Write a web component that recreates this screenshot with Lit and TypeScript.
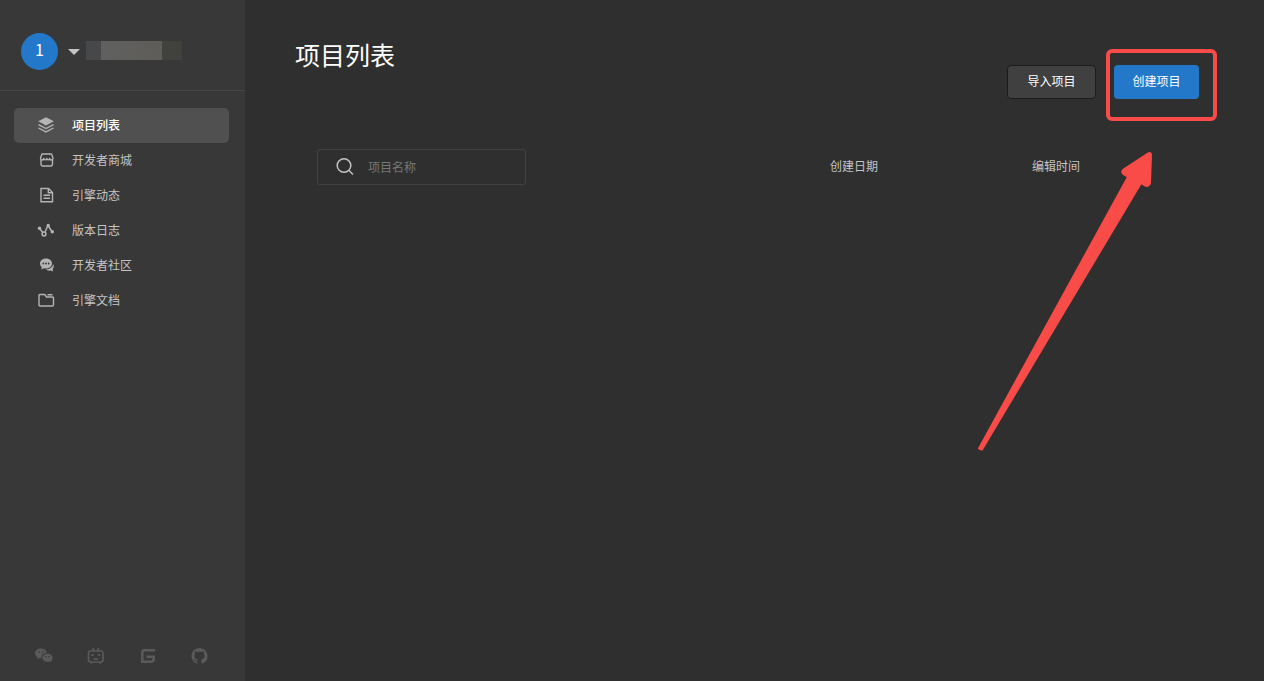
import { LitElement, html, css, svg } from "lit";
import { customElement } from "lit/decorators.js";

const navItems = [
  {
    label: "项目列表",
    icon: svg`<path fill="currentColor" d="M10 1.200 2.200 5.300 10 9.400l7.800-4.100z"/><path fill="none" stroke="currentColor" stroke-width="1.400" d="M2.500 8.600 10 12.500l7.500-3.900M2.500 12 10 15.900l7.500-3.900"/>`,
  },
  {
    label: "开发者商城",
    icon: svg`<g fill="none" stroke="currentColor" stroke-width="1.400" stroke-linejoin="round"><path d="M6 3h9.500l1.500 4c0 2.600-3.100 2.600-3.300.4-.2 2-2.800 2-2.900 0-.1 2-2.800 2-3 0C7.600 9.600 4.500 9.600 4.500 7z"/><path d="M5 9v4.600q0 1.400 1.400 1.400h8.700q1.400 0 1.400-1.400V9"/></g>`,
  },
  {
    label: "引擎动态",
    icon: svg`<g fill="none" stroke="currentColor" stroke-width="1.400"><path d="M5 2.500h7.500l4 4v9.200H5z"/><path d="M12.300 2.500v4.200h4.200M7.500 9.200h6.500M7.500 12.200h6.500"/></g>`,
  },
  {
    label: "版本日志",
    icon: svg`<g fill="none" stroke="currentColor" stroke-width="1.500"><path d="m3.500 7.500 3.300 4M9 11l3-6.500 4 6"/><circle cx="8" cy="13" r="1.900"/></g><g fill="currentColor"><circle cx="3.500" cy="7.200" r="1.700"/><circle cx="12.200" cy="4.500" r="1.700"/><circle cx="16.300" cy="10.700" r="1.700"/></g>`,
  },
  {
    label: "开发者社区",
    icon: svg`<path fill="currentColor" d="M10 2.500c3.500 0 6 2.200 6 5s-2.500 5-6 5q-1.100 0-2.100-.3L5.400 13.400l.3-2.300C4.600 10.200 4 9 4 7.500c0-2.800 2.500-5 6-5m7 5.600c1.300 1.600.8 3.900-.3 5l.3 2.500-2.200-1.100c-2 .4-4-.1-4.700-1 3.600-.2 6.800-2.200 6.900-5.400"/><g fill="#383838"><circle cx="7.300" cy="7.500" r=".9"/><circle cx="10" cy="7.500" r=".9"/><circle cx="12.700" cy="7.500" r=".9"/></g>`,
  },
  {
    label: "引擎文档",
    icon: svg`<path fill="none" stroke="currentColor" stroke-width="1.400" stroke-linejoin="round" d="M3.800 3.500h5l1.700 2.500h6q1 0 1 1v7q0 1-1 1H4q-1 0-1-1V4.500q0-1 .8-1M11.500 3.700h5"/>`,
  },
];

const socialLinks = [
  {
    label: "微信",
    icon: svg`<path fill="currentColor" d="M7 2.500c3.200 0 5.700 1.900 6 4.500-3.500 0-6 2-5.500 5.200q-1.200.1-2.500-.3L2.700 13l.6-2C1.800 10 1 8.800 1 7.300 1 4.600 3.700 2.500 7 2.500m6.500 5.200c3 0 5.200 1.700 5.200 4 0 1.300-.7 2.300-1.700 3l.4 1.600-1.900-.9q-1 .3-2 .3c-2.900 0-5.200-1.700-5.200-4s2.300-4 5.200-4"/><g fill="#383838"><circle cx="5" cy="6" r=".8"/><circle cx="9" cy="6" r=".8"/><circle cx="11.800" cy="10.500" r=".7"/><circle cx="15.200" cy="10.500" r=".7"/></g>`,
  },
  {
    label: "哔哩哔哩",
    icon: svg`<g fill="none" stroke="currentColor" stroke-width="1.600"><rect x="2.500" y="5" width="14.500" height="11" rx="2"/><path d="m6.500 2 2 3M13 2l-2 3M5 9.500l3-1M14.500 9.500l-3-1M7.500 12.700l1.200.7 1-.7 1 .7 1.200-.7M5.500 16v1.700M14 16v1.700"/></g>`,
  },
  {
    label: "Gitee",
    icon: svg`<path fill="none" stroke="currentColor" stroke-width="2.600" d="M17 4.300H6.500q-2.200 0-2.200 2.200v9.200H13q2.700 0 2.700-2.700v-2.300H8.500"/>`,
  },
  {
    label: "GitHub",
    icon: svg`<path fill="currentColor" transform="translate(1.500 2)" fill-rule="evenodd" d="M8 0C3.600 0 0 3.600 0 8c0 3.500 2.300 6.500 5.500 7.600.4.100.5-.2.500-.4v-1.500c-2 .4-2.500-.5-2.700-.9-.1-.3-.5-1-.8-1.200-.3-.2-.7-.5 0-.5.600 0 1.100.6 1.200.8.700 1.200 1.900.9 2.300.7.100-.5.300-.9.500-1.100-1.800-.2-3.600-.9-3.600-4 0-.9.300-1.600.8-2.100-.1-.2-.4-1 .1-2.100 0 0 .7-.2 2.200.8a7.600 7.600 0 0 1 4 0c1.500-1 2.200-.8 2.200-.8.400 1.100.200 1.900.1 2.100.5.600.8 1.300.8 2.100 0 3.100-1.900 3.700-3.700 3.900.3.300.6.800.6 1.500v2.300c0 .2.100.5.500.4A8 8 0 0 0 16 8c0-4.400-3.600-8-8-8"/>`,
  },
];

@customElement("app-root")
export class AppRoot extends LitElement {
  static styles = css`
    :host {
      display: flex;
      min-height: 100vh;
      background: #2f2f2f;
      color: #c4c4c4;
      font: 12px/18px "Noto Sans CJK SC", "Microsoft YaHei", sans-serif;
    }
    * { box-sizing: border-box; }
    button, input { font: inherit; }
    a { color: inherit; text-decoration: none; }
    .sidebar {
      display: flex;
      flex-direction: column;
      flex: 0 0 245px;
      background: #383838;
    }
    .account {
      display: flex;
      align-items: center;
      height: 91px;
      padding: 13px 21px 0;
      border: 0;
      border-bottom: 1px solid #464646;
      background: none;
      color: #c4c4c4;
    }
    .avatar {
      width: 37px;
      height: 37px;
      border-radius: 50%;
      background: #2478ca;
      color: #fff;
      font-size: 16px;
      line-height: 32px;
      text-align: center;
    }
    .caret {
      margin: 0 6px 0 10px;
      border: 6px solid transparent;
      border-top-color: #c4c4c4;
      border-bottom: 0;
    }
    .name { display: flex; height: 19px; margin-bottom: 2px; }
    .name-start { width: 15px; background: #464849; }
    .name-middle { width: 61px; background: linear-gradient(90deg, #606060, #5e5d59); }
    .name-end { width: 20px; background: #41413e; }
    .menu { padding: 17px 16px 0 14px; }
    .item {
      display: flex;
      align-items: center;
      gap: 16px;
      height: 35px;
      padding: 0 0 2px 22px;
      border-radius: 5px;
    }
    .item.active { background: #505050; color: #fff; font-weight: 500; }
    .item svg { width: 20px; height: 18px; color: #b4b4b4; }
    .social {
      display: flex;
      justify-content: space-between;
      margin-top: auto;
      padding: 0 35px 15px 34px;
      color: #5a5a5a;
    }
    .social a, .social svg { display: block; width: 20px; height: 20px; }
    .main { flex: 1; min-width: 0; padding: 35px 30px 0 50px; }
    h1 { margin: 0; color: #fff; font-size: 25px; font-weight: 400; line-height: 38px; }
    .top { display: flex; justify-content: space-between; }
    .actions { display: flex; gap: 18px; padding: 30px 35px 0 0; }
    .btn {
      height: 34px;
      padding: 0 0 2px;
      border: 0;
      border-radius: 4px;
      color: #fff;
    }
    .secondary { width: 89px; border: 1px solid #1b1b1b; background: #404040; }
    .primary { width: 85px; background: #2478ca; }
    .highlighted { position: relative; display: flex; }
    .callout {
      position: absolute;
      top: -20px;
      right: -21px;
      width: 250px;
      height: 410px;
      pointer-events: none;
    }
    .projects {
      width: calc(100% - 22px);
      margin: 50px 0 0 22px;
      border-collapse: collapse;
      table-layout: fixed;
    }
    .projects th { padding: 0; font-weight: 400; text-align: left; }
    .projects .date { width: 202px; padding-bottom: 3px; }
    .search {
      display: flex;
      align-items: center;
      gap: 13px;
      width: 209px;
      height: 36px;
      padding-left: 17px;
      border: 1px solid #424242;
      border-radius: 3px;
    }
    .search svg { flex: none; width: 20px; height: 20px; }
    .search input {
      flex: 1;
      min-width: 0;
      padding: 0;
      border: 0;
      outline: 0;
      background: none;
      color: #fff;
    }
    .search input::placeholder { color: #777; }
  `;

  render() {
    return html`
      <aside class="sidebar">
        <button class="account" aria-label="账户">
          <span class="avatar">1</span>
          <span class="caret"></span>
          <span class="name"><span class="name-start"></span><span class="name-middle"></span><span class="name-end"></span></span>
        </button>
        <nav class="menu">
          ${navItems.map(
            (item, i) => html`<a class="item ${i === 0 ? "active" : ""}" href="#">
              <svg viewBox="0 0 20 18" aria-hidden="true">${item.icon}</svg><span>${item.label}</span>
            </a>`,
          )}
        </nav>
        <div class="social">
          ${socialLinks.map(
            (link) => html`<a href="#" aria-label=${link.label}><svg viewBox="0 0 20 20">${link.icon}</svg></a>`,
          )}
        </div>
      </aside>
      <main class="main">
        <header class="top">
          <h1>项目列表</h1>
          <div class="actions">
            <button class="btn secondary">导入项目</button>
            <div class="highlighted">
              <button class="btn primary">创建项目</button>
              <svg class="callout" viewBox="970 45 250 410" aria-hidden="true">
                <rect x="1108" y="51" width="107" height="68" rx="4" fill="none" stroke="#f94b48" stroke-width="4" />
                <path fill="#f94b48" stroke="#f94b48" stroke-width="2" stroke-linejoin="round" d="M979 448.500 1128 177 1123.500 174Q1121 171.500 1123.500 169.500L1148 153.500Q1151 152 1151 155L1150 183Q1149 187 1145 185.500L1141 183 982 449.500Z" />
              </svg>
            </div>
          </div>
        </header>
        <table class="projects">
          <thead>
            <tr>
              <th>
                <label class="search">
                  <svg viewBox="0 0 20 20" fill="none" stroke="#c4c4c4" stroke-width="1.500" aria-hidden="true">
                    <circle cx="9" cy="8.500" r="6.800" /><path d="m14 13.500 4 4" />
                  </svg>
                  <input type="text" placeholder="项目名称" aria-label="项目名称" />
                </label>
              </th>
              <th class="date">创建日期</th>
              <th class="date">编辑时间</th>
            </tr>
          </thead>
        </table>
      </main>
    `;
  }
}
